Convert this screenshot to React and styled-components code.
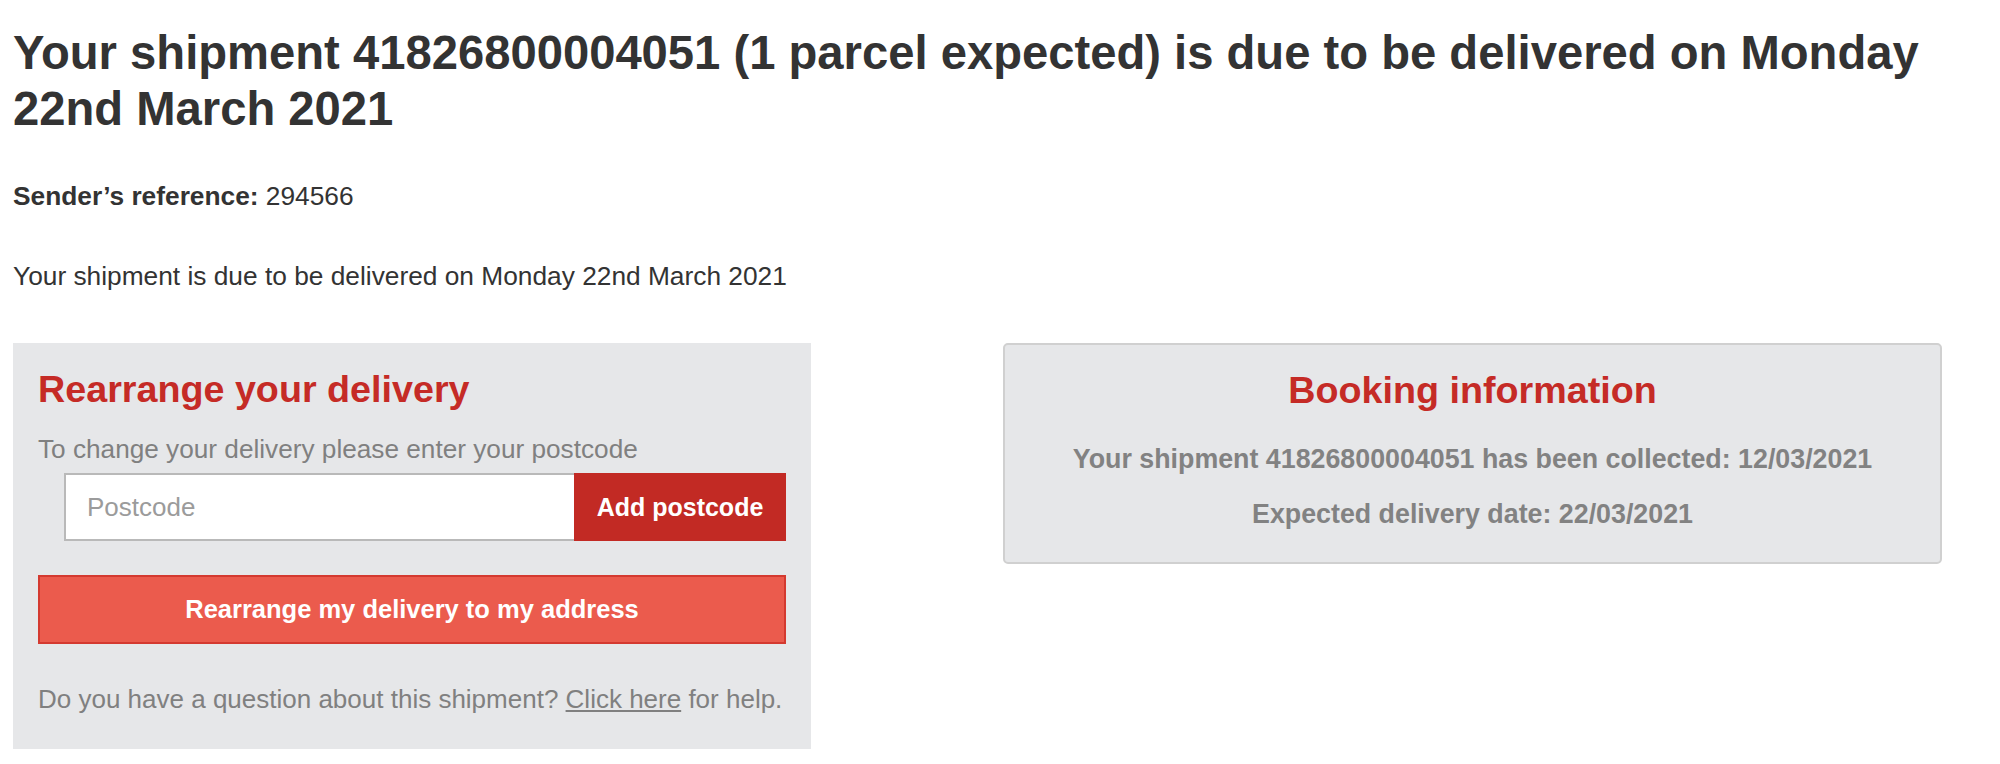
import React from "react";
import styled, { createGlobalStyle } from "styled-components";

const GlobalStyle = createGlobalStyle`
  * { box-sizing: border-box; }
  body {
    margin: 0;
    background: #ffffff;
    color: #333333;
    font-family: "Liberation Sans", Arial, sans-serif;
  }
`;

const Page = styled.main`
  padding: 25px 13px 20px;
`;

const Title = styled.h1`
  margin: 0;
  font-size: 47.2px;
  line-height: 56px;
  font-weight: 700;
  color: #333333;
`;

const InfoLine = styled.p`
  margin: ${(p) => p.$top}px 0 0;
  font-size: 26.3px;
  line-height: 36px;
  color: #333333;
`;

const Strong = styled.strong`
  font-weight: 700;
`;

const Panels = styled.div`
  display: flex;
  align-items: flex-start;
  gap: 192px;
  margin-top: 49px;
`;

const RearrangePanel = styled.section`
  width: 798px;
  background: #e6e7e9;
  padding: 24px 25px 32px;
`;

const PanelHeading = styled.h2`
  margin: 0;
  font-size: 37.7px;
  line-height: 44px;
  font-weight: 700;
  color: #c52b26;
  text-align: ${(p) => (p.$center ? "center" : "left")};
`;

const GrayText = styled.p`
  margin: ${(p) => p.$top}px 0 0;
  font-size: ${(p) => p.$size || 26}px;
  line-height: 36px;
  color: #808080;
  white-space: nowrap;
`;

const HelpLink = styled.a`
  color: inherit;
  text-decoration: underline;
`;

const PostcodeRow = styled.form`
  display: flex;
  margin: 6px 0 0 26px;
  height: 68px;
`;

const PostcodeInput = styled.input`
  flex: 1;
  min-width: 0;
  height: 100%;
  margin: 0;
  border: 2px solid #b9b9b9;
  border-right: none;
  background: #ffffff;
  padding: 0 21px;
  font-family: "Liberation Sans", Arial, sans-serif;
  font-size: 26px;
  color: #333333;
  outline: none;
  &::placeholder {
    color: #9b9b9b;
  }
`;

const AddButton = styled.button`
  width: 212px;
  height: 100%;
  margin: 0;
  border: none;
  background: #c22a24;
  color: #ffffff;
  font-family: "Liberation Sans", Arial, sans-serif;
  font-size: 25px;
  font-weight: 700;
  cursor: pointer;
`;

const RearrangeButton = styled.button`
  display: block;
  width: 100%;
  height: 69px;
  margin-top: 34px;
  border: 2px solid #d43a30;
  background: #eb5b4d;
  color: #ffffff;
  font-family: "Liberation Sans", Arial, sans-serif;
  font-size: 25.5px;
  font-weight: 700;
  cursor: pointer;
`;

const BookingPanel = styled.section`
  width: 939px;
  background: #e6e7e9;
  border: 2px solid #d0d0d0;
  border-radius: 5px;
  padding: 23px 20px 30px;
  text-align: center;
`;

const BookingLine = styled.p`
  margin: ${(p) => p.$top}px 0 0;
  font-size: 26.8px;
  line-height: 36px;
  font-weight: 700;
  color: #828282;
`;

export default function App() {
  return (
    <>
      <GlobalStyle />
      <Page>
        <Title>
          Your shipment 41826800004051 (1 parcel expected) is due to be delivered on Monday 22nd March 2021
        </Title>
        <InfoLine $top={41}>
          <Strong>Sender’s reference:</Strong> 294566
        </InfoLine>
        <InfoLine $top={44}>
          Your shipment is due to be delivered on Monday 22nd March 2021
        </InfoLine>

        <Panels>
          <RearrangePanel>
            <PanelHeading>Rearrange your delivery</PanelHeading>
            <GrayText $top={20} $size={26.2}>
              To change your delivery please enter your postcode
            </GrayText>
            <PostcodeRow onSubmit={(e) => e.preventDefault()}>
              <PostcodeInput type="text" placeholder="Postcode" />
              <AddButton type="submit">Add postcode</AddButton>
            </PostcodeRow>
            <RearrangeButton type="button">Rearrange my delivery to my address</RearrangeButton>
            <GrayText $top={37}>
              Do you have a question about this shipment? <HelpLink href="#">Click here</HelpLink> for help.
            </GrayText>
          </RearrangePanel>

          <BookingPanel>
            <PanelHeading $center>Booking information</PanelHeading>
            <BookingLine $top={29}>
              Your shipment 41826800004051 has been collected: 12/03/2021
            </BookingLine>
            <BookingLine $top={19}>Expected delivery date: 22/03/2021</BookingLine>
          </BookingPanel>
        </Panels>
      </Page>
    </>
  );
}
